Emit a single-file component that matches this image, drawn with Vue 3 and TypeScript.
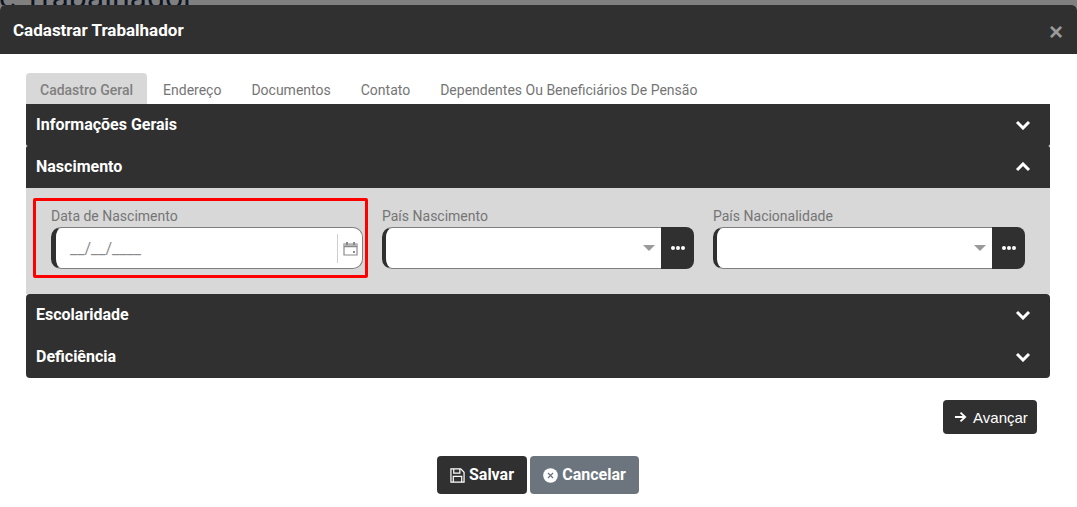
<script setup lang="ts">
const tabs = ['Endereço', 'Documentos', 'Contato', 'Dependentes Ou Beneficiários De Pensão']
</script>

<template>
  <div class="page">
    <div class="behind">e Trabalhador</div>
    <div class="modal">
      <header class="head">
        <h1>Cadastrar Trabalhador</h1>
        <span class="close">×</span>
      </header>
      <div class="body">
        <nav class="tabs">
          <span class="tab active">Cadastro Geral</span>
          <span v-for="t in tabs" :key="t" class="tab">{{ t }}</span>
        </nav>
        <section class="bar first">
          <span>Informações Gerais</span>
          <svg class="chev" viewBox="0 0 16 10"><path d="M2 2l6 6 6-6" /></svg>
        </section>
        <section class="bar open">
          <span>Nascimento</span>
          <svg class="chev" viewBox="0 0 16 10"><path d="M2 8l6-6 6 6" /></svg>
        </section>
        <div class="panel">
          <div class="field date">
            <label>Data de Nascimento</label>
            <div class="input">
              <span class="mask">__/__/____</span>
              <span class="cal">
                <svg viewBox="0 0 15 15" width="15" height="15">
                  <path d="M1 3h13v11H1z" fill="none" stroke="#8a8a8a" stroke-width="1.200" />
                  <path d="M1 5.500h13" stroke="#8a8a8a" stroke-width="1.400" />
                  <path d="M1 3h13v2H1z" fill="#b5b5b5" />
                  <path d="M4 1v3M11 1v3" stroke="#8a8a8a" stroke-width="2" />
                  <rect x="10" y="10" width="2" height="2" fill="#8a8a8a" />
                </svg>
              </span>
            </div>
          </div>
          <div class="field">
            <label>País Nascimento</label>
            <div class="select">
              <div class="sel-box"><i class="caret"></i></div>
              <button class="dots"><b></b><b></b><b></b></button>
            </div>
          </div>
          <div class="field">
            <label>País Nacionalidade</label>
            <div class="select">
              <div class="sel-box"><i class="caret"></i></div>
              <button class="dots"><b></b><b></b><b></b></button>
            </div>
          </div>
        </div>
        <section class="bar second">
          <span>Escolaridade</span>
          <svg class="chev" viewBox="0 0 16 10"><path d="M2 2l6 6 6-6" /></svg>
        </section>
        <section class="bar last">
          <span>Deficiência</span>
          <svg class="chev" viewBox="0 0 16 10"><path d="M2 2l6 6 6-6" /></svg>
        </section>
        <div class="next-row">
          <button class="next">
            <svg viewBox="0 0 14 12" width="13" height="12"><path d="M1 6h11M7 1.300L12 6l-5 4.700" fill="none" stroke="#fff" stroke-width="2" /></svg>
            Avançar
          </button>
        </div>
        <div class="actions">
          <button class="btn save">
            <svg viewBox="0 0 16 16" width="15" height="15">
              <path d="M1 1h10.500L15 4.500V15H1z" fill="none" stroke="#fff" stroke-width="1.300" />
              <path d="M4 1v4.500h6.500V1M3.500 15V9h9v6" fill="none" stroke="#fff" stroke-width="1.300" />
            </svg>
            <span>Salvar</span>
          </button>
          <button class="btn cancel">
            <svg viewBox="0 0 16 16" width="15" height="15">
              <circle cx="8" cy="8" r="7.800" fill="#fff" />
              <path d="M5.300 5.300l5.400 5.400M10.700 5.300l-5.400 5.400" stroke="#6c757d" stroke-width="1.300" />
            </svg>
            <span>Cancelar</span>
          </button>
        </div>
      </div>
    </div>
  </div>
</template>

<style>
html, body { margin: 0; background: #fff; overflow: hidden; }
</style>

<style scoped>
.page {
  width: 1077px;
  height: 507px;
  overflow: hidden;
  background: #808080;
  font-family: Roboto, sans-serif;
  position: relative;
}
.behind {
  position: absolute;
  left: -1px;
  top: -21px;
  font-size: 32px;
  font-weight: 400;
  line-height: 36px;
  color: #0d1424;
  white-space: nowrap;
}
.modal {
  position: absolute;
  left: 0;
  top: 5px;
  width: 1077px;
  height: 502px;
  background: #fff;
  border-radius: 5px 5px 0 0;
  overflow: hidden;
}
.head {
  height: 49px;
  background: #303030;
  color: #fff;
  display: flex;
  align-items: center;
  justify-content: space-between;
  padding: 0 14px 0 13px;
}
.head h1 {
  margin: 0;
  font-size: 17px;
  font-weight: 700;
}
.close {
  color: #9a9a9a;
  font: 700 24px/1 "Liberation Sans", sans-serif;
  margin-top: 4px;
}
.body {
  padding: 19px 27px 0 26px;
}
.tabs {
  display: flex;
  height: 31px;
}
.tab {
  padding: 8px 15px 0;
  font-size: 14px;
  line-height: 18px;
  color: #757575;
}
.tab.active {
  background: #d8d8d8;
  border-radius: 4px 4px 0 0;
  font-weight: 500;
  color: #808080;
  padding: 8px 14px 0;
  margin-right: 1px;
}
.bar {
  height: 42px;
  box-sizing: border-box;
  background: #303030;
  color: #fff;
  font-size: 16px;
  font-weight: 700;
  display: flex;
  align-items: center;
  justify-content: space-between;
  padding: 0 19px 0 10px;
}
.bar > span {
  margin-top: -2px;
}
.bar.first { border-radius: 0 0 2px 2px; }
.bar.open { border-radius: 2px 2px 0 0; }
.bar.second { border-radius: 4px 4px 0 0; }
.bar.last { border-radius: 0 0 4px 4px; }
.chev {
  width: 16px;
  height: 10px;
  fill: none;
  stroke: #fff;
  stroke-width: 3;
}
.panel {
  height: 106px;
  box-sizing: border-box;
  background: #d8d8d8;
  display: grid;
  grid-template-columns: repeat(3, 312px);
  column-gap: 19px;
  padding-left: 25px;
}
.field {
  padding-top: 19px;
}
.field label {
  display: block;
  font-size: 14px;
  line-height: 18px;
  color: #757575;
  margin-bottom: 2px;
}
.date {
  position: relative;
}
.date::before {
  content: "";
  position: absolute;
  left: -18px;
  top: 10px;
  width: 335px;
  height: 80px;
  border: 3px solid #f00;
  box-sizing: border-box;
  border-radius: 2px;
  pointer-events: none;
}
.input {
  height: 42px;
  box-sizing: border-box;
  background: #fff;
  border: 1px solid #808080;
  border-left: 5px solid #303030;
  border-radius: 10px;
  display: flex;
  align-items: center;
  justify-content: space-between;
  padding-left: 14px;
}
.mask {
  color: #8a8a8a;
  font-size: 16px;
}
.cal {
  height: 29px;
  width: 24px;
  border-left: 1px solid #cfcfcf;
  display: flex;
  align-items: center;
  justify-content: center;
}
.select {
  display: flex;
  height: 42px;
}
.sel-box {
  flex: 1;
  box-sizing: border-box;
  background: #fff;
  border-top: 1px solid #808080;
  border-bottom: 1px solid #808080;
  border-left: 4px solid #303030;
  border-radius: 10px 0 0 10px;
  position: relative;
}
.caret {
  position: absolute;
  right: 6px;
  top: 17px;
  border-left: 6px solid transparent;
  border-right: 6px solid transparent;
  border-top: 6px solid #9a9a9a;
}
.dots {
  width: 33px;
  height: 42px;
  border: 0;
  padding: 0;
  background: #303030;
  border-radius: 0 8px 8px 0;
  display: flex;
  align-items: center;
  justify-content: center;
  gap: 1px;
}
.dots b {
  width: 4px;
  height: 4px;
  border-radius: 50%;
  background: #fff;
}
.next-row {
  display: flex;
  justify-content: flex-end;
  padding: 22px 13px 0 0;
}
.next {
  width: 94px;
  height: 34px;
  border: 0;
  border-radius: 4px;
  padding: 0 0 0 2px;
  background: #303030;
  color: #fff;
  font: 400 15px "Liberation Sans", sans-serif;
  display: flex;
  align-items: center;
  justify-content: center;
  gap: 6px;
}
.actions {
  display: flex;
  justify-content: center;
  gap: 3px;
  margin-top: 22px;
}
.btn {
  height: 38px;
  border: 0;
  border-radius: 4px;
  color: #fff;
  font: 700 16px Roboto, sans-serif;
  display: flex;
  align-items: center;
  justify-content: center;
  gap: 4px;
  padding: 0;
}
.btn span {
  margin-top: -2px;
}
.save { width: 90px; background: #303030; }
.cancel { width: 109px; background: #6c757d; }
</style>
